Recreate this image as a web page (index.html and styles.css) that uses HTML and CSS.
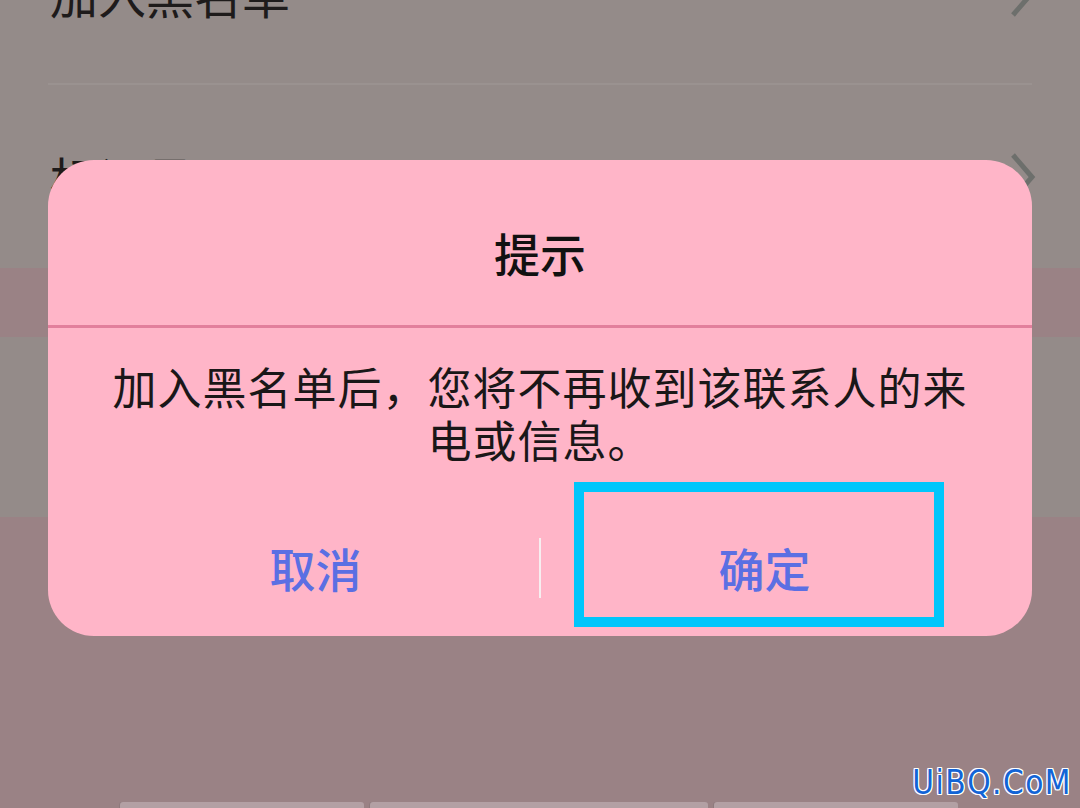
FILE: index.html
```html
<!DOCTYPE html>
<html lang="zh-CN">
<head>
<meta charset="utf-8">
<title>提示</title>
<link rel="stylesheet" href="styles.css">
</head>
<body>
<div class="screen">
  <section class="list">
    <div class="item item-first">
      <span class="item-label">加入黑名单</span>
      <svg class="chev" width="26" height="48" viewBox="0 0 26 48"><path d="M3 2 L22 24 L3 46" fill="none" stroke="#6d6f6c" stroke-width="5"/></svg>
    </div>
    <div class="item">
      <span class="item-label">标记号码</span>
      <svg class="chev" width="26" height="48" viewBox="0 0 26 48"><path d="M3 2 L22 24 L3 46" fill="none" stroke="#6d6f6c" stroke-width="5"/></svg>
    </div>
  </section>
  <section class="band band-pink-a"></section>
  <section class="band band-grey"></section>
  <section class="band band-pink-b">
    <div class="tabs">
      <div class="tab tab-side"></div>
      <div class="tab tab-mid"></div>
      <div class="tab tab-side"></div>
    </div>
  </section>

  <div class="dialog">
    <div class="dialog-title">提示</div>
    <div class="dialog-divider"></div>
    <p class="dialog-msg">加入黑名单后，您将不再收到该联系人的来<br>电或信息。</p>
    <div class="dialog-actions">
      <button class="action">取消</button>
      <span class="action-sep"></span>
      <button class="action">确定</button>
    </div>
    <div class="highlight"></div>
  </div>

  <div class="watermark">UiBQ.CoM</div>
</div>
</body>
</html>
```

FILE: styles.css
```css
html, body {
  margin: 0;
  padding: 0;
}
body {
  width: 1080px;
  height: 808px;
  overflow: hidden;
  font-family: "Noto Sans CJK SC", "Noto Sans", sans-serif;
  background: #9a8285;
}
.screen {
  position: relative;
  width: 1080px;
  height: 808px;
  overflow: hidden;
  display: flex;
  flex-direction: column;
}
.list {
  height: 268px;
  flex: none;
  background: #948b89;
  padding: 0 48px;
  overflow: hidden;
  display: flex;
  flex-direction: column;
}
.item {
  flex: none;
  height: 184px;
  display: flex;
  align-items: center;
  justify-content: space-between;
}
.item-first {
  margin-top: -97px;
  border-bottom: 2px solid #9a9290;
  height: 180px;
}
.item-label {
  font-size: 48px;
  color: #1e1b1b;
  line-height: 1;
  padding-left: 2px;
}
.chev {
  margin-right: -4px;
}
.band {
  flex: none;
}
.band-pink-a {
  height: 69px;
  background: #9a8285;
}
.band-grey {
  height: 180px;
  background: #948b89;
}
.band-pink-b {
  flex: 1;
  background: #9a8285;
  padding-top: 285px;
}
.tabs {
  display: flex;
  gap: 6px;
  margin-left: 120px;
  width: 838px;
}
.tab {
  height: 12px;
  background: #b3a0a4;
  border-radius: 3px 3px 0 0;
  box-shadow: -1px 0 0 #8e7a7d;
}
.tab-side { width: 244px; }
.tab-mid { width: 338px; }

.dialog {
  position: absolute;
  left: 48px;
  top: 160px;
  width: 984px;
  height: 476px;
  background: #ffb5c8;
  border-radius: 46px;
  display: flex;
  flex-direction: column;
}
.dialog-title {
  height: 165px;
  box-sizing: border-box;
  padding-top: 64px;
  text-align: center;
  font-size: 46px;
  line-height: 56px;
  font-weight: 500;
  color: #111;
}
.dialog-divider {
  height: 3px;
  background: #e27f9c;
}
.dialog-msg {
  margin: 0;
  padding-top: 32px;
  text-align: center;
  font-size: 44px;
  line-height: 53px;
  letter-spacing: 1px;
  color: #1a1718;
}
.dialog-actions {
  margin-top: 42px;
  height: 120px;
  padding: 0 44px;
  display: flex;
  align-items: center;
}
.action {
  flex: 1;
  height: 100%;
  border: 0;
  background: transparent;
  font-family: "Noto Sans CJK SC", "Noto Sans", sans-serif;
  font-size: 46px;
  font-weight: 500;
  color: #5b6fe3;
  padding: 0 0 2px 0;
}
.action-sep {
  width: 2px;
  height: 60px;
  background: #f7eef0;
}
.highlight {
  position: absolute;
  left: 526px;
  top: 322px;
  width: 370px;
  height: 145px;
  box-sizing: border-box;
  border: 10px solid #00c6fb;
}
.watermark {
  position: absolute;
  right: 8px;
  top: 764px;
  font-family: "DejaVu Sans Condensed", "DejaVu Sans", sans-serif;
  font-stretch: condensed;
  font-size: 33px;
  letter-spacing: 1.5px;
  line-height: 38px;
  color: #1264d6;
  text-shadow: 1px 0 0 #fff, -1px 0 0 #fff, 0 1px 0 #fff, 0 -1px 0 #fff, 1px 1px 0 #fff, -1px -1px 0 #fff, 1px -1px 0 #fff, -1px 1px 0 #fff;
}
```
